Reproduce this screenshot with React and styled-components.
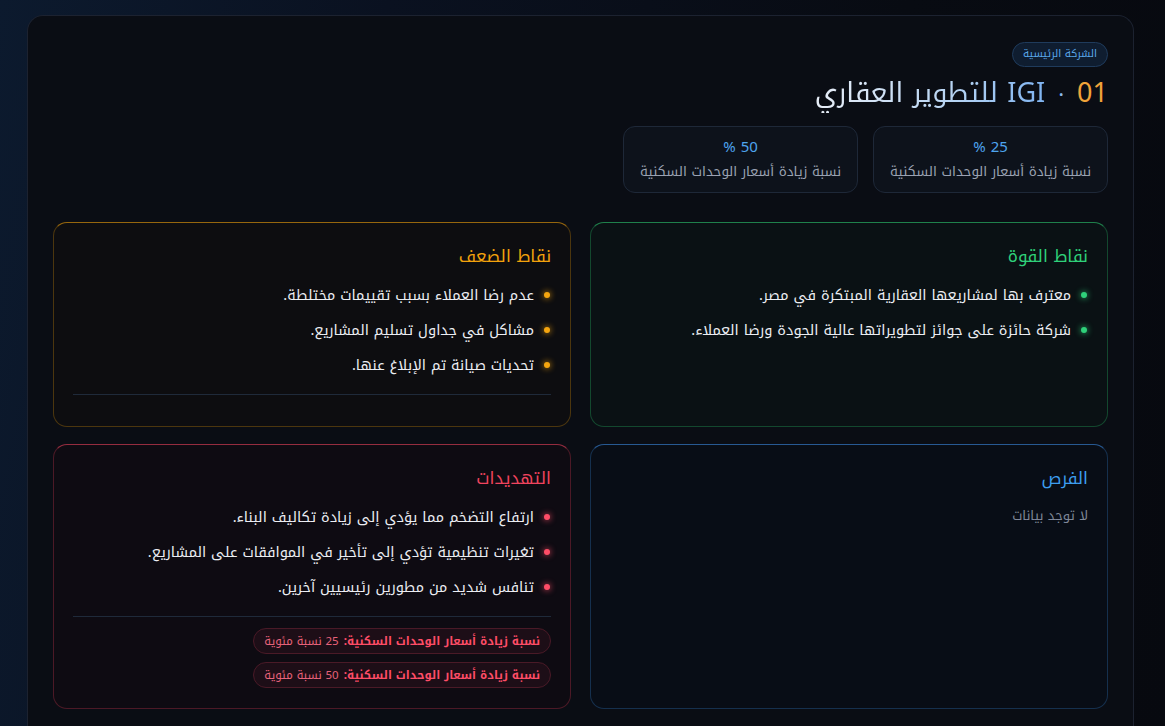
import React from 'react'
import styled, { createGlobalStyle } from 'styled-components'

const GlobalStyle = createGlobalStyle`
  * { box-sizing: border-box; }
  html, body {
    margin: 0;
    min-height: 100%;
    background: linear-gradient(100deg, #0c1a2e 0%, #0a1120 30%, #080b12 70%, #07090f 100%);
    font-family: "Noto Kufi Arabic", "DejaVu Sans", "Noto Sans", sans-serif;
    color: #e6e8ee;
  }
`

const tones = {
  green: { title: '#2fd17a', border: 'rgba(46, 204, 113, 0.3)', top: 'rgba(46, 204, 113, 0.6)', bg: '#0a1114', dot: '#2fd17a' },
  amber: { title: '#f2a20c', border: 'rgba(242, 162, 12, 0.28)', top: 'rgba(242, 162, 12, 0.6)', bg: '#0d0d10', dot: '#f5a50f' },
  red: { title: '#f0445e', border: 'rgba(240, 68, 94, 0.28)', top: 'rgba(240, 68, 94, 0.6)', bg: '#0e0b12', dot: '#ff4d67' },
  blue: { title: '#3d9ef0', border: 'rgba(61, 140, 230, 0.28)', top: 'rgba(61, 140, 230, 0.6)', bg: '#080d16', dot: '#3d9ef0' },
}

const Page = styled.div`
  direction: rtl;
  padding: 15px 31px 0 27px;
`

const Shell = styled.main`
  background: #0a0d14;
  border: 1px solid #1c2230;
  border-bottom: none;
  border-radius: 16px 16px 0 0;
  padding: 26px 25px 40px;
  min-height: 720px;
`

const Header = styled.header`
  display: flex;
  flex-direction: column;
  align-items: flex-start;
`

const Badge = styled.span`
  font-size: 10.5px;
  color: #5aa7ea;
  background: #0f1d30;
  border: 1px solid #1f3b5c;
  border-radius: 999px;
  padding: 3px 10px 4px;
  line-height: 16px;
`

const Title = styled.h1`
  margin: 6px 0 0;
  font-size: 27px;
  font-weight: 400;
  line-height: 40px;
  display: flex;
  gap: 13px;
  align-items: baseline;
`

const Num = styled.span`
  color: #f0a43a;
`

const Sep = styled.span`
  color: #8cb8ec;
  font-size: 22px;
`

const Name = styled.span`
  background: linear-gradient(270deg, #7fb3f0 0%, #b7d4f3 40%, #e8eef7 100%);
  -webkit-background-clip: text;
  background-clip: text;
  color: transparent;
`

const Stats = styled.div`
  display: flex;
  gap: 15px;
  margin-top: 11px;
`

const Stat = styled.div`
  width: 235px;
  height: 67px;
  border: 1px solid #1e2838;
  border-radius: 12px;
  background: #0d121b;
  display: flex;
  flex-direction: column;
  align-items: center;
  justify-content: center;
  gap: 6px;
`

const StatValue = styled.div`
  color: #4ea4ee;
  font-size: 15px;
  line-height: 18px;
`

const StatLabel = styled.div`
  color: #9aa2b2;
  font-size: 13.5px;
  line-height: 20px;
`

const Grid = styled.section`
  display: grid;
  grid-template-columns: 1fr 1fr;
  column-gap: 19px;
  row-gap: 17px;
  margin-top: 29px;
`

const Card = styled.div`
  min-height: ${p => p.$h}px;
  background: ${p => tones[p.$tone].bg};
  border: 1px solid ${p => tones[p.$tone].border};
  border-top-color: ${p => tones[p.$tone].top};
  border-radius: 14px;
  padding: 21px 19px 12px;
`

const CardTitle = styled.h3`
  margin: 0 0 15px;
  font-size: 17px;
  font-weight: 400;
  line-height: 24px;
  color: ${p => tones[p.$tone].title};
`

const List = styled.ul`
  list-style: none;
  margin: 0;
  padding: 0;
  display: flex;
  flex-direction: column;
  gap: 11px;
`

const Item = styled.li`
  display: flex;
  align-items: center;
  gap: 10px;
  font-size: 14.5px;
  line-height: 24px;
  color: #eceef3;
`

const Dot = styled.span`
  flex: none;
  width: 6px;
  height: 6px;
  border-radius: 50%;
  background: ${p => tones[p.$tone].dot};
  box-shadow: 0 0 6px ${p => tones[p.$tone].dot};
  margin-right: 1px;
`

const Empty = styled.p`
  margin: -2px 0 0;
  font-size: 13px;
  color: #7f8798;
`

const Divider = styled.hr`
  border: none;
  border-top: 1px solid #1f2a3a;
  margin: 17px 0 0;
`

const Pills = styled.div`
  display: flex;
  flex-direction: column;
  align-items: flex-start;
  gap: 8px;
  margin-top: 11px;
`

const Pill = styled.div`
  font-size: 11.5px;
  line-height: 24px;
  padding: 0 10px;
  border-radius: 999px;
  background: #1d0e17;
  border: 1px solid #4a1a27;
  color: #e8627a;
  display: flex;
  gap: 5px;
`

const PillKey = styled.b`
  color: #ff4d67;
  font-weight: 700;
`

const strengths = [
  'معترف بها لمشاريعها العقارية المبتكرة في مصر.',
  'شركة حائزة على جوائز لتطويراتها عالية الجودة ورضا العملاء.',
]

const weaknesses = [
  'عدم رضا العملاء بسبب تقييمات مختلطة.',
  'مشاكل في جداول تسليم المشاريع.',
  'تحديات صيانة تم الإبلاغ عنها.',
]

const threats = [
  'ارتفاع التضخم مما يؤدي إلى زيادة تكاليف البناء.',
  'تغيرات تنظيمية تؤدي إلى تأخير في الموافقات على المشاريع.',
  'تنافس شديد من مطورين رئيسيين آخرين.',
]

const metrics = [
  { label: 'نسبة زيادة أسعار الوحدات السكنية', value: 25 },
  { label: 'نسبة زيادة أسعار الوحدات السكنية', value: 50 },
]

const Bullets = ({ items, tone }) => (
  <List>
    {items.map((t, i) => (
      <Item key={i}>
        <Dot $tone={tone} />
        {t}
      </Item>
    ))}
  </List>
)

const App = () => {
  return (
    <Page>
      <GlobalStyle />
      <Shell>
        <Header>
          <Badge>الشركة الرئيسية</Badge>
          <Title>
            <Num>01</Num>
            <Sep>·</Sep>
            <Name>IGI للتطوير العقاري</Name>
          </Title>
          <Stats>
            {metrics.map((m, i) => (
              <Stat key={i}>
                <StatValue>{m.value} %</StatValue>
                <StatLabel>{m.label}</StatLabel>
              </Stat>
            ))}
          </Stats>
        </Header>

        <Grid>
          <Card $tone="green" $h={205}>
            <CardTitle $tone="green">نقاط القوة</CardTitle>
            <Bullets items={strengths} tone="green" />
          </Card>

          <Card $tone="amber" $h={205}>
            <CardTitle $tone="amber">نقاط الضعف</CardTitle>
            <Bullets items={weaknesses} tone="amber" />
            <Divider />
          </Card>

          <Card $tone="blue" $h={265}>
            <CardTitle $tone="blue">الفرص</CardTitle>
            <Empty>لا توجد بيانات</Empty>
          </Card>

          <Card $tone="red" $h={265}>
            <CardTitle $tone="red">التهديدات</CardTitle>
            <Bullets items={threats} tone="red" />
            <Divider />
            <Pills>
              {metrics.map((m, i) => (
                <Pill key={i}>
                  <PillKey>{m.label}:</PillKey>
                  <span>{m.value} نسبة مئوية</span>
                </Pill>
              ))}
            </Pills>
          </Card>
        </Grid>
      </Shell>
    </Page>
  )
}

export default App
